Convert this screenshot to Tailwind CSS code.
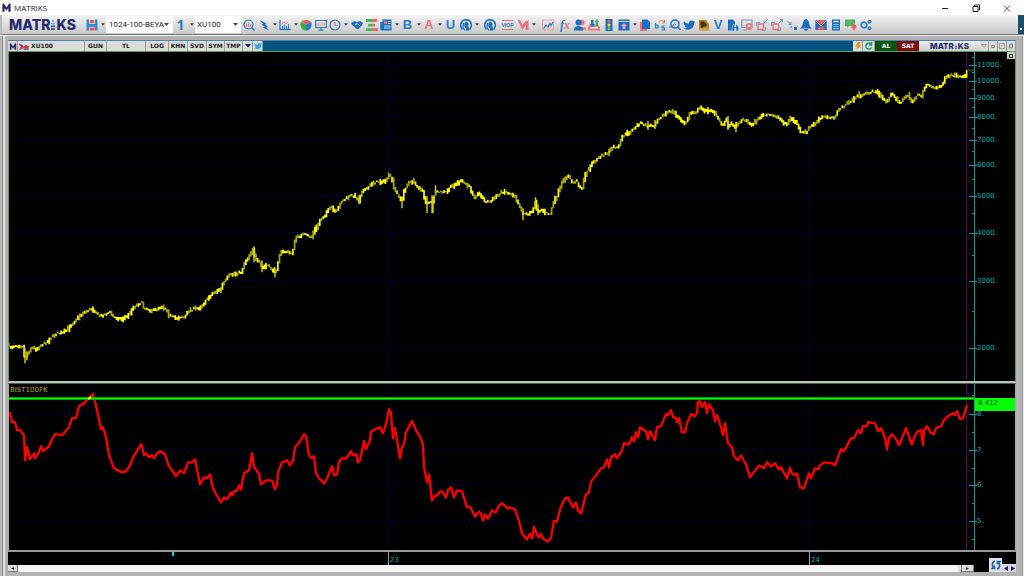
<!DOCTYPE html>
<html lang="tr">
<head>
<meta charset="utf-8">
<meta name="viewport" content="width=device-width, initial-scale=1">
<title>MATRIKS</title>
<script src="https://cdn.jsdelivr.net/npm/@tailwindcss/browser@4"></script>
</head>
<body class="flex h-screen flex-col overflow-hidden bg-white font-['Open_Sans',sans-serif]">

<svg class="hidden" aria-hidden="true">
  <symbol id="dn" viewBox="0 0 5 3"><path d="M0 0H5L2.5 3Z" fill="#444"/></symbol>
  <symbol id="m" viewBox="0 0 12 12"><path d="M0.5 11.5V1L2.5 .5L6 6L9.500 .5L11.500 1V11.500H8.500V6.500L6 10L3.500 6.500V11.500Z" fill="#272a6b"/></symbol>
  <symbol id="i" viewBox="0 0 4 11"><g fill="#46b4e6"><rect x="1" y="0" width="2" height="2"/><rect x="0" y="3" width="1.700" height="2"/><rect x="2.300" y="3" width="1.700" height="2"/></g><g fill="#272a6b"><rect x="0" y="6" width="1.700" height="2"/><rect x="2.300" y="6" width="1.700" height="2"/><rect x="0" y="9" width="1.700" height="2"/><rect x="2.300" y="9" width="1.700" height="2"/></g></symbol>
  <symbol id="bird" viewBox="0 0 12 12"><path d="M1 2C2.500 4 4 4.500 6 4.500C5.800 2.500 7 1.500 8.300 1.500C9.200 1.500 9.800 1.900 10.200 2.300L11.800 1.800L11.200 3L12 3.200L11 4.200C11 8.500 8 10.700 4.500 10.700C3 10.700 1.500 10.300 .5 9.600C2 9.700 3 9.300 3.800 8.700C2.600 8.500 2 7.900 1.700 7H2.700C1.500 6.500 .9 5.700 .9 4.600L1.800 4.800C.8 4 .6 3 1 2Z"/></symbol>
  <symbol id="head" viewBox="0 0 12 12"><path d="M2.500 10.500C-.8 7 .5 .8 6 .7C11.500 .8 12.800 7 9.500 10.500" fill="none" stroke="#1b6fc2" stroke-width="1.600"/><path d="M5.500 2.500C8 2.500 9 4.500 8.200 6.500L9.500 11.500H6V9L4.800 8.500C4 7 4 4 5.500 2.500Z" fill="#1b6fc2"/><path d="M3.500 4L3 8.500L5 11.500" fill="none" stroke="#1b6fc2" stroke-width="1.200"/></symbol>
</svg>

<header class="flex h-[15px] shrink-0 items-center bg-white">
  <svg class="ml-px h-[9px] w-[11px]" viewBox="0 0 12 12"><use href="#m"/></svg>
  <h1 class="ml-0.5 flex-1 text-[8px] leading-none text-[#222]">MATRIKS</h1>
  <div class="mr-3 flex gap-5 text-[#222]">
    <button aria-label="Simge durumuna küçült"><svg class="h-2.5 w-2.5" viewBox="0 0 10 10" fill="none" stroke="currentColor" stroke-width="1"><path d="M2 5.500H8"/></svg></button>
    <button aria-label="Önceki boyut"><svg class="h-2.5 w-3" viewBox="0 0 12 10" fill="none" stroke="currentColor" stroke-width="1"><path d="M3 3.500H8V8.500H3ZM4.500 3V2H9.500V7H8.500"/></svg></button>
    <button aria-label="Kapat"><svg class="h-2.5 w-2.5" viewBox="0 0 10 10" fill="none" stroke="currentColor" stroke-width=".8"><path d="M2 2.500L8 8.500M8 2.500L2 8.500"/></svg></button>
  </div>
</header>

<nav aria-label="Araç çubuğu" class="flex h-5 shrink-0 items-stretch border-b border-[#777] border-l-2 border-l-[#bbb] bg-linear-to-b from-[#f4f4f4] to-[#c8c8c8] [&>button]:grid [&>button]:shrink-0 [&>button]:place-items-center [&>button>svg]:h-3">
  <div class="flex w-[82px] shrink-0 items-center gap-px pl-[7px] font-['Inter',sans-serif] text-[14px] leading-none font-extrabold text-[#272a6b]">MATR<svg class="h-2.5 w-1"><use href="#i"/></svg>KS</div>
  <button aria-label="Kaydet" class="w-[15px]"><svg viewBox="0 0 12 12" class="w-3"><path d="M.5.5H3V5.500H9V.5H11.500V11.500H9V7.500H3V11.500H.5Z" fill="#2d8bd8"/><path d="M3 5H9V7.500H3Z" fill="#2d8bd8"/><path d="M4 1H8.200V4.300H4ZM3.700 8.500H8.500V11.500H3.700Z" fill="#f25555"/></svg></button>
  <button aria-label="Kaydet menüsü" class="w-[7px]"><svg class="max-h-[3px] w-1"><use href="#dn"/></svg></button>
  <div class="relative my-px flex w-[67px] shrink-0">
    <select aria-label="Sayfa" class="w-full appearance-none overflow-hidden bg-white pr-2 pl-[3px] font-['Roboto',sans-serif] text-[8px] leading-none text-[#222]"><option>1024-100-BEYA</option></select>
    <svg class="pointer-events-none absolute top-[7px] right-1 h-[3px] w-[5px]"><use href="#dn"/></svg>
  </div>
  <button aria-label="Sayfa 1" class="w-[15px] font-['Open_Sans',sans-serif] text-[14px] leading-none font-bold text-[#2a7cc8]">1</button>
  <button aria-label="Sayfa listesi" class="w-[7px]"><svg class="max-h-[3px] w-1"><use href="#dn"/></svg></button>
  <div class="relative my-px flex w-[46px] shrink-0">
    <select aria-label="Sembol" class="w-full appearance-none bg-white pr-2 pl-0.5 font-['Roboto',sans-serif] text-[8px] leading-none text-[#222]"><option>XU100</option></select>
    <svg class="pointer-events-none absolute top-[7px] right-[3px] h-[3px] w-[5px]"><use href="#dn"/></svg>
  </div>
  <button aria-label="Ara" class="w-[15px]"><svg viewBox="0 0 12 12" class="w-3" fill="none"><circle cx="5.500" cy="5.500" r="4.500" stroke="#2a7cc8" stroke-width="1.200"/><path d="M8.800 8.800L11.500 11.500" stroke="#2a7cc8" stroke-width="1.500"/><path d="M3.500 7.500V5M5.500 7.500V3.500M7.500 7.500V5.500" stroke="#f07078" stroke-width="1.200"/></svg></button>
  <button aria-label="Emir" class="w-[15px]"><svg viewBox="0 0 12 12" class="w-3"><path d="M1.500 1L8.500 4.500L7 5.500L10 8L8.500 8.500L11 11.500L5 8.600L6.700 7.700L3.500 5.500L5 4.800Z" fill="#1b6fc2"/></svg></button>
  <button aria-label="Emir menüsü" class="w-[7px]"><svg class="max-h-[3px] w-1"><use href="#dn"/></svg></button>
  <button aria-label="Grafik" class="w-3.5"><svg viewBox="0 0 12 12" class="w-3" fill="none"><path d="M1 1V10.500H11.500" stroke="#2a7cc8" stroke-width="1.300"/><path d="M3 5L5 2.500L7 5L9 3" stroke="#f07078" stroke-width=".8"/><path d="M3.500 10V7M5.500 10V5.500M7.500 10V7M9.500 10V5" stroke="#2a7cc8" stroke-width="1.100"/></svg></button>
  <button aria-label="Grafik menüsü" class="w-[7px]"><svg class="max-h-[3px] w-1"><use href="#dn"/></svg></button>
  <button aria-label="Pasta" class="w-3.5"><svg viewBox="0 0 12 12" class="w-3"><path d="M6 5.500L.8 3C2.500 .2 9.500 .2 11.200 3Z" fill="#f25f5f"/><path d="M6 5.500L11.500 3C12.300 8 10 11.200 6 11.700Z" fill="#2a7cc8"/><path d="M6 5.500V11.700C2 11.200 -.3 8 .5 3Z" fill="#33b24a"/></svg></button>
  <button aria-label="Ekran" class="w-[15px]"><svg viewBox="0 0 12 12" class="w-3" fill="none"><path d="M.7 1.500H11.300V8.500H.7Z" stroke="#2a7cc8" stroke-width="1.200"/><path d="M6 9V11M3.500 11.200H8.500" stroke="#2a7cc8" stroke-width="1.200"/><path d="M3 7V4M5 7V3.500M7 7V4M9 7V3.500" stroke="#f0a060"/></svg></button>
  <button aria-label="Saat" class="w-3.5"><svg viewBox="0 0 12 12" class="w-3" fill="none"><circle cx="6" cy="6" r="5" stroke="#2a7cc8" stroke-width="1.200"/><path d="M6 2.500V6.500H9" stroke="#f07078" stroke-width="1.200"/></svg></button>
  <button aria-label="Saat menüsü" class="w-[7px]"><svg class="max-h-[3px] w-1"><use href="#dn"/></svg></button>
  <button aria-label="Takas" class="w-[15px]"><svg viewBox="0 0 12 12" class="w-3"><path d="M0 4L3 2L6 3L9 2L12 4L10.500 7L7.500 10.200L5.500 9.800L1.500 6.500Z" fill="#1b6fc2"/><path d="M6 3.500L4.500 5.500L7 5L9.500 7.500" fill="none" stroke="#dcdcdc" stroke-width=".8"/></svg></button>
  <button aria-label="Derinlik" class="w-[15px]"><svg viewBox="0 0 12 12" class="w-3"><path d="M0 0H6V3H0ZM2 4.700H6V7.500H2ZM0 9.200H6V12H0Z" fill="#3fb85a"/><path d="M6 0H11V3H6ZM6 4.700H9V7.500H6ZM6 9.200H12V12H6Z" fill="#f06468"/></svg></button>
  <button aria-label="Haberler" class="w-3.5"><svg viewBox="0 0 12 12" class="w-3"><path d="M2.500.5H11.500V11.500H1.500Q.3 11.500 .3 10V3H2.500Z" fill="#1b6fc2"/><path d="M4 2H7V5H4Z" fill="#f07078"/><path d="M8 2.500H10.500M8 4.500H10.500M4 7H10.500M4 9H10.500" stroke="#e4e4e4" stroke-width=".9"/></svg></button>
  <button aria-label="Haber menüsü" class="w-[7px]"><svg class="max-h-[3px] w-1"><use href="#dn"/></svg></button>
  <button class="w-[15px] font-['Liberation_Sans',sans-serif] text-[13px] leading-none font-bold text-[#2a7cc8]">B</button>
  <button aria-label="B menüsü" class="w-[7px]"><svg class="max-h-[3px] w-1"><use href="#dn"/></svg></button>
  <button class="w-3.5 font-['Liberation_Sans',sans-serif] text-[13px] leading-none font-bold text-[#f07078]">A</button>
  <button aria-label="A menüsü" class="w-[7px]"><svg class="max-h-[3px] w-1"><use href="#dn"/></svg></button>
  <button class="w-[15px] font-['Liberation_Sans',sans-serif] text-[13px] leading-none font-bold text-[#2a7cc8]">U</button>
  <button aria-label="Analist" class="w-[15px]"><svg class="w-3"><use href="#head"/></svg></button>
  <button aria-label="Analist menüsü" class="w-[7px]"><svg class="max-h-[3px] w-1"><use href="#dn"/></svg></button>
  <button aria-label="Uzman" class="ml-0.5 w-[15px]"><svg class="w-3"><use href="#head"/></svg></button>
  <button class="ml-[3px] w-[15px]"><span class="border-y border-[#f07078] font-['Liberation_Sans',sans-serif] text-[5px] leading-[8px] font-bold text-[#2a7cc8]">VIOP</span></button>
  <button aria-label="Matriks" class="w-[15px]"><svg viewBox="0 0 12 12" class="w-3"><path d="M.5 1H3L5.500 6L9.500 1V3L11.500 1V11H8.800V6L5.500 11Z" fill="#f07078"/></svg></button>
  <button aria-label="Matriks menüsü" class="w-[7px]"><svg class="max-h-[3px] w-1"><use href="#dn"/></svg></button>
  <button aria-label="Çizgi grafik" class="ml-[3px] w-[15px]"><svg viewBox="0 0 12 12" class="w-3" fill="none"><path d="M.6 1H11.400V11H.6Z" stroke="#f0a0a4"/><path d="M1.500 9.500L4 6L6 8L8 4.500L9 6.500L11 3" stroke="#2a7cc8" stroke-width="1.100"/></svg></button>
  <button class="ml-[3px] w-3.5"><span class="font-['Liberation_Serif',serif] text-[12px] leading-none font-bold text-[#2a7cc8] italic">f<span class="text-[#f07078]">x</span></span></button>
  <button aria-label="Kullanıcılar" class="w-[15px]"><svg viewBox="0 0 12 12" class="w-3"><circle cx="8" cy="3.500" r="2.700" fill="#f07078"/><path d="M6 11V8L12 8.500V11Z" fill="#f07078"/><circle cx="4.500" cy="3.500" r="3" fill="#1b6fc2"/><path d="M0 11.500C0 8 1.500 7.500 4.500 7C7.500 7.500 9 8 9 11.500Z" fill="#1b6fc2"/></svg></button>
  <button aria-label="Aktarım" class="w-3.5"><svg viewBox="0 0 12 12" class="w-3"><path d="M0 8L2 6H10L12 8V11.500H0Z" fill="#f07078"/><path d="M2 8H10V9.500H2Z" fill="#eee"/><path d="M3 1V5H1.500L4.500 8L7 5H5.500V1Z" fill="#1b6fc2"/><path d="M7.500 7V3H6.500L9 0L11.500 3H10V7Z" fill="#3fb85a"/></svg></button>
  <button aria-label="Durum" class="w-[15px]"><svg viewBox="0 0 12 12" class="w-3"><path d="M2.500 0H9.500V12H2.500Z" fill="#1b6fc2"/><circle cx="6" cy="2.500" r="1.500" fill="#f25f5f"/><circle cx="6" cy="6" r="1.500" fill="#ffe14a"/><circle cx="6" cy="9.500" r="1.500" fill="#4fd05f"/></svg></button>
  <button aria-label="Pencere" class="w-[15px]"><svg viewBox="0 0 12 12" class="w-3"><path d="M.5.5H11.500V11.500H.5Z" fill="#1b6fc2"/><path d="M.5 2.500H11.500" stroke="#ddd"/><path d="M6 4L9 7H7.500V10H4.500V7H3Z" fill="#f4a0a4"/></svg></button>
  <button aria-label="Pencere menüsü" class="w-[7px]"><svg class="max-h-[3px] w-1"><use href="#dn"/></svg></button>
  <button aria-label="Kopyala" class="w-3.5"><svg viewBox="0 0 12 12" class="w-3"><path d="M1 3H8V12H1Z" fill="#f07078"/><path d="M3 .5H8.500L11 3V10H3Z" fill="#1b6fc2"/></svg></button>
  <button aria-label="Al sat" class="w-[15px]"><svg viewBox="0 0 12 12" class="w-3" fill="none"><path d="M1.500 4V9H4V6H1.500M10.500 7H8V8.800H10.500V11H7.500" stroke="#2a7cc8" stroke-width="1.200"/><path d="M5 3.500C6 1 9 1 10.500 4M10.500 1V4H8" stroke="#f07078" stroke-width="1"/></svg></button>
  <button aria-label="Sembol ara" class="w-[15px]"><svg viewBox="0 0 12 12" class="w-3" fill="none" stroke="#2a7cc8"><circle cx="6" cy="5" r="4" stroke-width="1.600"/><path d="M9 8L11.500 11" stroke-width="1.800"/><path d="M0 8H3L5.500 4.500L7 6" /></svg></button>
  <button aria-label="Twitter" class="w-3.5"><svg class="w-3" fill="#1b6fc2"><use href="#bird"/></svg></button>
  <button aria-label="Altın" class="w-[15px]"><svg viewBox="0 0 12 12" class="w-3"><path d="M1 1H8L11 5V11.500H1Z" fill="#b8862c"/><path d="M2 3C5 1 8 3 9 7L3 9Z" fill="#4a3512"/><path d="M1 10H11" stroke="#e0b860"/></svg></button>
  <button class="w-3.5 font-['Liberation_Sans',sans-serif] text-[13px] leading-none font-bold text-[#2a7cc8]">V</button>
  <button aria-label="Rapor ara" class="w-[15px]"><svg viewBox="0 0 12 12" class="w-3"><path d="M1 .5H6L8 2.500V11.500H1Z" fill="#1b6fc2"/><path d="M5 12V8L6.500 5.500H7.500V8H9V5.500H10L11.700 8V12H9V9.500H7.500V12Z" fill="#1b6fc2" stroke="#ddd" stroke-width=".6"/></svg></button>
  <button aria-label="Ekran ayarı" class="w-3.5"><svg viewBox="0 0 12 12" class="w-3" fill="none"><path d="M.7 1H11V8.500H.7ZM2.500 11H6" stroke="#6c9cd0" stroke-width="1.200"/><circle cx="8" cy="7.500" r="2.600" stroke="#f07078" stroke-width="1.700"/></svg></button>
  <button aria-label="Küçült" class="w-[15px]"><svg viewBox="0 0 12 12" class="w-3" fill="none"><path d="M2 5H7.500V10.500H2Z" stroke="#f07078" stroke-width="1.300"/><path d="M.5 7V3.500H4M11.500.5L8 4M8 1.500V4H10.500M9.500 8V11.500H6" stroke="#5c94cc" stroke-width=".8"/></svg></button>
  <button aria-label="Büyüt" class="w-[15px]"><svg viewBox="0 0 12 12" class="w-3" fill="none"><path d="M2 5H7.500V10.500H2Z" stroke="#f07078" stroke-width="1.300"/><path d="M.5 7V3.500H4M8 4L11.500.5M9 .5H11.500V3M9.500 8V11.500H6" stroke="#5c94cc" stroke-width=".8"/></svg></button>
  <button aria-label="Taşı" class="w-[15px]"><svg viewBox="0 0 12 12" class="w-3"><path d="M1 1.500L5 5.500M5 3V5.500H2.500" fill="none" stroke="#5c94cc"/><path d="M8 8H11V11H8Z" fill="#1b6fc2"/><path d="M5.500 7V8.500H4" stroke="#5c94cc" fill="none"/></svg></button>
  <button aria-label="Alarm" class="w-3.5"><svg viewBox="0 0 12 12" class="w-3" fill="#1b6fc2"><path d="M6 0C7 0 9 1.500 9.200 4.500C9.400 7 10.500 8 12 9.500H0C1.500 8 2.600 7 2.800 4.500C3 1.500 5 0 6 0Z"/><path d="M4 10H8C8 12.400 4 12.400 4 10Z"/></svg></button>
  <button aria-label="Posta" class="w-[15px]"><svg viewBox="0 0 12 12" class="w-3"><path d="M.3 1H11.700V11H.3Z" fill="#1b6fc2"/><path d="M1 1.300H11L6 6.500ZM1.500 10.700L5 7L6 8L7 7L10.500 10.700Z" fill="#f25f5f"/><path d="M.5 1.500L6 7L11.500 1.500" fill="none" stroke="#f0d8d8" stroke-width=".8"/></svg></button>
  <button aria-label="Hesap makinesi" class="w-[15px]"><svg viewBox="0 0 12 12" class="w-3"><path d="M2 .5H10V11.500H2Z" fill="#1b6fc2"/><path d="M3.500 2.500H8.500" stroke="#e8e8e8" stroke-width="1.500"/><path d="M3.500 5.500H8.500M3.500 7.500H8.500M3.500 9.500H8.500" stroke="#d4e2f0" stroke-dasharray="1.200 .7"/></svg></button>
  <button aria-label="Sohbet" class="w-[15px]"><svg viewBox="0 0 12 12" class="w-3"><path d="M0 .5H10V7H4L2 9V7H0Z" fill="#4fb562"/><path d="M6 6.500C7 5 8 5 9 6.500C10 5 12 6 11.500 8L9 11.500L6.500 8.500Z" fill="#f25f6a"/></svg></button>
  <button aria-label="Ayarlar" class="w-[15px]"><svg viewBox="0 0 12 12" class="w-3" fill="none" stroke="#2a7cc8"><circle cx="4" cy="6" r="2.800" stroke-width="1.700"/><circle cx="9.500" cy="2.800" r="1.400" stroke-width="1.200"/><circle cx="9.500" cy="9.200" r="1.400" stroke-width="1.200"/></svg></button>
  <span class="flex-1"></span>
  <button aria-label="Araç çubuğu seçenekleri" class="w-1.5 bg-[#1f4a68]"><span class="mt-2 h-0.5 w-0.5 bg-white"></span></button>
</nav>

<main class="flex min-h-0 flex-1 border-t border-[#eee] bg-[#b2b2b2]">
  <div class="w-[3px] border-r border-[#858585] bg-[#b8b8b8]"></div>
  <div class="w-0.5 bg-[#e4e4e4]"></div>
  <div class="flex min-w-0 flex-1 flex-col pt-1 pr-1.5 pb-1 pl-[3px]">

    <div class="flex h-[11px] shrink-0 items-stretch border-t border-[#4a86ae] bg-[#04527f] font-['DejaVu_Sans',sans-serif] text-[6px] leading-[10px] font-bold text-[#222] [&>button]:shrink-0 [&>button]:border-r [&>button]:border-[#999] [&>button]:bg-[#dcdcdc] [&>button]:text-center">
      <button aria-label="Matriks menü" class="grid w-2.5 place-items-center"><svg class="h-[7px] w-2"><use href="#m"/></svg></button>
      <button class="flex w-[67px] items-center gap-px"><svg class="h-[7px] w-3" viewBox="0 0 13 8" fill="none"><path d="M1 1L4 4L2 7L6 5L9 3" stroke="#d83a3a" stroke-width="1.500"/><path d="M6 6L9 2L12 4V6Z" fill="#d83a3a"/><path d="M6 7H12M3 2L5 4" stroke="#34348c" stroke-width="1.300"/></svg>XU100</button>
      <button class="w-[22px]">GUN</button>
      <button class="w-[39px]">TL</button>
      <button class="w-[23px]">LOG</button>
      <button class="w-[19px]">KHN</button>
      <button class="w-[19px]">SVD</button>
      <button class="w-[18px]">SYM</button>
      <button class="w-[18px]">TMP</button>
      <button aria-label="Diğer" class="grid w-2.5 place-items-center"><svg class="h-1 w-1.5" viewBox="0 0 6 4"><path d="M0 0H6L3 3.500Z" fill="#14145c"/></svg></button>
      <button aria-label="Paylaş" class="grid w-2.5 place-items-center"><svg class="h-2 w-2" fill="#2fa8dc"><use href="#bird"/></svg></button>
      <span class="flex-1"></span>
      <button aria-label="Hızlı emir" class="grid w-2.5 place-items-center"><svg class="h-2 w-2" viewBox="0 0 8 8"><path d="M4 0L1 4.500H3.500L2 8L7.500 3.200H5L6.500 0Z" fill="#f09010"/></svg></button>
      <button aria-label="Yenile" class="grid w-3 place-items-center"><svg class="h-2 w-2" viewBox="0 0 8 8" fill="none"><path d="M6.500 5.500A3 3 0 1 1 6 2M6.500 0V3H4" stroke="#1c9a74" stroke-width="1.500"/></svg></button>
      <div class="flex w-11 shrink-0 text-center text-white"><button class="flex-1 bg-[#0a5410]">AL</button><button class="flex-1 bg-[#7c0c10]">SAT</button></div>
      <div class="flex w-[61px] shrink-0 items-center justify-center gap-px bg-linear-to-b from-[#f0f0f0] to-[#cccccc] font-['Inter',sans-serif] text-[8px] font-extrabold text-[#272a6b]">MATR<svg class="h-1.5 w-0.5"><use href="#i"/></svg>KS</div>
      <button aria-label="Aşağı" class="grid w-[9px] place-items-center"><svg class="h-1.5 w-1.5" viewBox="0 0 6 6" fill="none" stroke="#999"><path d="M.5 1.500H5.500L3 4.500Z"/></svg></button>
      <button aria-label="Küçült" class="grid w-[9px] place-items-center"><svg class="h-1.5 w-1.5" viewBox="0 0 6 6" fill="none" stroke="#888"><path d="M1.500 2.500H4.500V4.500H1.500Z"/></svg></button>
      <button aria-label="Kapla" class="grid w-[9px] place-items-center"><svg class="h-1.5 w-1.5" viewBox="0 0 6 6" fill="none" stroke="#999"><path d="M.5.5H5.500V5.500H.5ZM2 3H4"/></svg></button>
      <button aria-label="Kapat" class="grid w-[9px] place-items-center"><svg class="h-1.5 w-1.5" viewBox="0 0 6 6" fill="none" stroke="#777"><path d="M1.500 1H4.500V5H1.500Z"/></svg></button>
    </div>

    <section aria-label="XU100 fiyat grafiği" class="relative flex min-h-0 flex-[330] border border-[#5c9c5c] border-b-[#9ccc9c] bg-black">
      <svg id="price" class="h-full min-w-0 flex-1" viewBox="9 52 965 329" preserveAspectRatio="none"></svg>
      <div id="axis1" class="relative w-[41px] shrink-0 border-l border-[#00a0a0] font-['DejaVu_Sans',sans-serif] text-[7px] leading-[8px] text-[#00b4b4]"></div>
      <button aria-label="Bölmeyi büyüt" class="absolute top-0 right-0 grid h-[7px] w-2 place-items-center bg-[#ccc]"><span class="h-1 w-1 border border-[#333]"></span></button>
    </section>
    <div class="h-0.5 shrink-0 border-t border-[#ccc] bg-[#555]"></div>
    <section aria-label="BIST100FK göstergesi" class="relative flex min-h-0 flex-[166] border-x border-x-[#aaa] border-b-2 border-b-[#999] bg-black">
      <svg id="ratio" class="h-full min-w-0 flex-1" viewBox="9 384 965 165" preserveAspectRatio="none"></svg>
      <h2 class="absolute top-0.5 left-px font-['DejaVu_Sans',sans-serif] text-[7px] leading-[8px] text-[#b4b400]">BIST100FK</h2>
      <div id="axis2" class="relative w-[41px] shrink-0 border-l border-[#00a0a0] font-['DejaVu_Sans',sans-serif] text-[7px] leading-[8px] text-[#00b4b4]"></div>
    </section>

    <footer class="flex h-5 shrink-0 bg-black">
      <div class="flex min-w-0 flex-1 flex-col">
        <div id="dates" class="relative flex-1 font-['DejaVu_Sans',sans-serif] text-[7px] leading-[8px] text-[#00b4b4]"></div>
        <div class="flex h-[7px] items-stretch bg-[#f4f4f4]">
          <button aria-label="Sola kaydır" class="grid w-2.5 place-items-center border-r border-b border-[#777] bg-[#ddd]"><svg class="h-[3px] w-[3px]" viewBox="0 0 3 3"><path d="M3 0V3L0 1.500Z" fill="#333"/></svg></button>
          <span class="flex-1"></span>
          <span class="w-1 border-r border-[#777] bg-[#ddd]"></span>
          <button aria-label="Sağa kaydır" class="grid w-3 place-items-center border-r border-b border-[#777] bg-[#ddd]"><svg class="h-[3px] w-[3px]" viewBox="0 0 3 3"><path d="M0 0V3L3 1.500Z" fill="#333"/></svg></button>
        </div>
      </div>
      <div class="flex w-[42px] items-end justify-end">
        <button aria-label="Yenile" class="grid h-3.5 w-[13px] place-items-center bg-[#dde4ee]"><svg class="h-3 w-3" viewBox="0 0 12 12" fill="none" stroke="#2a62a8" stroke-width="1.700"><path d="M5 2C2 3 1.500 6 3.500 9M1 9.500H4.500V6.500M7 10C10 9 10.500 6 8.500 3M11 2.500H7.500V5.500"/></svg></button>
        <button aria-label="Geri" class="grid h-2 w-[7px] place-items-center bg-[#dcdcdc]"><svg class="h-[5px] w-1" viewBox="0 0 5 6"><path d="M5 0V6L0 3Z" fill="#1414a0"/></svg></button>
        <button aria-label="İleri" class="grid h-2 w-[7px] place-items-center bg-[#dcdcdc]"><svg class="h-[5px] w-1" viewBox="0 0 5 6"><path d="M0 0V6L5 3Z" fill="#1414a0"/></svg></button>
      </div>
    </footer>
  </div>
  <div class="w-0.5 border-l border-[#999] bg-[#ececec]"></div>
</main>

<script>
// Series as x,y pairs in chart units.
const price = '8,345 11,347 16,345 24,346 25,357 27,355 30,350 33,347 37,349 41,345 47,342 53,336 57,333 63,333 68,329 73,323 80,316 83,313 93,308 97,313 100,316 111,312 114,317 123,319 130,314 133,308 138,304 143,302 144,307 153,311 162,306 167,309 170,316 177,318 182,316 185,318 189,310 201,307 205,302 213,293 221,289 224,283 230,275 242,272 245,263 250,255 254,248 256,260 261,263 262,268 268,265 275,272 278,267 279,257 283,251 292,253 294,249 296,238 303,234 312,237 315,230 318,227 321,219 327,213 332,206 335,213 338,210 341,202 352,195 357,197 359,202 363,189 367,190 372,183 383,181 384,183 390,175 393,181 395,190 399,195 402,202 405,190 408,184 413,181 418,186 424,193 426,202 433,203 435,195 437,192 447,192 452,186 462,181 470,187 475,197 480,193 485,201 490,202 497,196 503,191 515,195 520,205 523,213 528,214 533,212 536,200 538,212 542,209 545,213 551,214 553,205 557,197 561,187 565,178 569,176 573,183 577,180 580,187 583,188 585,177 589,169 593,163 600,157 607,153 609,153 613,147 619,148 623,136 632,131 640,123 648,126 655,125 658,119 667,113 672,111 678,116 683,123 687,122 691,112 697,112 701,107 707,112 711,109 715,113 720,121 723,126 727,118 728,128 732,123 736,127 739,122 745,119 751,125 757,121 761,116 768,115 777,116 787,125 791,118 798,124 801,133 807,132 810,127 815,124 819,120 823,117 835,117 840,109 853,100 860,94 862,97 867,93 876,91 880,95 887,102 892,94 901,103 908,94 912,102 918,95 923,97 924,88 928,84 936,89 943,84 947,77 953,75 962,78 966,76 967,70';
const ratio = '8,413 10,413 12,422 15,422 17,430 20,430 24,435 25,460 27,447 30,459 34,453 35,458 39,452 41,446 43,451 49,446 52,439 55,434 62,435 69,427 72,418 76,418 79,406 83,404 88,399 93,394 97,410 101,429 103,427 106,437 109,455 114,468 122,472 126,471 130,465 133,457 138,449 141,444 142,446 144,455 146,453 149,457 152,455 154,458 157,453 160,451 165,454 169,466 173,471 176,476 180,470 184,473 188,462 192,462 195,459 200,484 204,477 207,478 210,474 213,488 218,497 221,502 224,497 227,499 231,492 232,495 234,491 237,490 239,485 241,489 244,473 249,470 252,453 254,466 259,474 261,484 266,480 272,480 275,489 277,485 278,472 282,462 287,460 290,465 293,460 295,447 300,441 304,434 306,436 309,455 312,458 314,456 316,473 320,479 324,483 327,478 332,466 334,475 337,474 339,462 342,458 346,458 351,451 353,455 356,454 358,462 360,460 364,441 366,449 370,440 371,431 380,427 383,433 386,424 389,409 391,413 393,438 395,428 397,440 400,458 402,447 404,444 406,432 412,421 417,432 420,436 423,445 424,467 427,482 429,474 432,500 434,496 437,495 440,491 442,491 446,497 448,490 451,487 454,497 457,490 462,491 467,507 470,506 475,516 479,511 481,513 483,520 485,514 488,518 492,510 496,512 499,505 502,503 508,508 510,507 515,509 519,520 522,533 527,539 530,533 532,538 534,526 537,534 539,537 541,533 543,538 548,541 551,537 554,520 557,521 559,513 561,506 565,498 568,497 573,507 576,502 578,510 581,513 583,505 586,494 589,492 591,481 596,475 601,468 604,467 607,459 609,467 611,457 615,454 617,458 622,450 624,443 629,444 632,437 634,441 636,432 638,437 640,427 646,431 648,439 650,431 655,440 657,427 661,426 666,414 668,415 671,410 673,417 676,418 677,422 679,418 682,432 685,432 687,423 691,414 695,416 697,413 698,402 700,401 702,407 705,402 707,413 709,404 713,410 715,421 717,415 721,427 723,435 725,423 728,443 732,447 734,456 738,460 741,455 746,464 750,477 753,473 759,465 764,468 767,462 771,466 775,463 779,469 781,467 787,478 790,467 792,473 795,475 797,473 800,487 804,488 809,473 811,478 815,468 818,469 820,465 824,462 832,463 835,465 841,449 844,451 851,438 854,438 858,430 861,433 863,426 867,426 868,422 875,423 878,431 881,428 885,438 887,449 889,438 892,434 895,437 899,445 902,438 906,428 908,433 911,443 912,444 915,435 918,431 921,430 923,445 924,430 927,426 931,433 934,434 936,428 941,426 944,420 948,416 953,413 955,415 957,411 960,419 963,418 967,405';

// Grid lines, shared by both panes.
function grid(rows, top, bottom) {
  let d = rows.map(([y]) => `M12 ${y}H966`).join('');
  d += [388.5, 809].map(x => `M${x} ${top}V${bottom}`).join('');
  return `<path d="${d}" stroke="#00005c" stroke-dasharray="2 2" fill="none"/>
    <path d="M966.500 ${top}V${bottom}" stroke="#5c0060" fill="none"/>`;
}
// Tick marks and labels of a value axis, placed as a share of the pane's height.
function axis(id, rows, minor, top, height) {
  const at = y => `top:${((y - top) / height * 100).toFixed(2)}%`;
  document.getElementById(id).innerHTML =
    rows.map(([y, t]) => `<i class="absolute -left-1.5 h-px w-2 bg-[#00a0a0]" style="${at(y)}"></i><span class="absolute left-0.5 -translate-y-1/2" style="${at(y)}">${t}</span>`).join('') +
    minor.map(y => `<i class="absolute -left-[3px] h-px w-[3px] bg-[#00a0a0]" style="${at(y)}"></i>`).join('');
}
const rows1 = [[64.5, '11000.'], [80.5, '10000.'], [97.5, '9000.'], [117, '8000.'], [139.5, '7000.'], [165, '6000.'], [195.5, '5000.'], [232.5, '4000.'], [280.5, '3000.'], [348, '2000.']];
const rows2 = [[413.5, '8.'], [449.5, '7.'], [484.5, '6.'], [520.5, '5.']];
axis('axis1', rows1, [57, 72, 89, 107, 128, 151, 179, 213, 255, 311], 52, 329);
axis('axis2', rows2, [395, 431, 467, 502, 538], 384, 165);

// Daily bars, interpolated between the key points.
const pts = price.split(' ').map(p => p.split(',').map(Number));
const level = x => {
  let k = 1;
  while (k < pts.length - 1 && pts[k][0] < x) k++;
  const [a, b] = [pts[k - 1], pts[k]];
  return a[1] + (b[1] - a[1]) * Math.min(1, (x - a[0]) / (b[0] - a[0]));
};
let dim = '', bright = '', seed = 7;
const rnd = () => (seed = (seed * 16807) % 2147483647) / 2147483647;
for (let x = 9; x < 967; x += 1.68) {
  const a = level(x - .8), b = level(x + .8), mid = (a + b) / 2 + (rnd() - .5) * 2.2;
  const half = Math.abs(a - b) / 2 + .6 + rnd() * rnd() * 2.6;
  const bar = `M${x.toFixed(1)} ${(mid - half).toFixed(1)}V${(mid + half).toFixed(1)}`;
  if (rnd() < .45) dim += bar; else bright += bar;
}
const spikes = 'M25 348V363M27 351V360M221 287V293M254 246V262M262 260V272M275 268V277M359 195V204M402 198V208M427 196V213M432 195V213M433 196V213M435.500 185V193M523 208V220M535.500 197V209M538 204V215M609 149V156M648 121V130M655 120V129M728 116V130M736 122V132';
document.getElementById('price').innerHTML = grid(rows1, 52, 381) +
  `<path d="${dim}" stroke="#a8a800" stroke-width="1.700" fill="none"/>
   <path d="${bright}" stroke="#ffff00" stroke-width="1.700" fill="none"/>
   <path d="${spikes}" stroke="#d4d400" stroke-width="1.400" fill="none"/>
   <path d="M967 70H974" stroke="#0a8a0a" fill="none"/>`;

document.getElementById('ratio').innerHTML = grid(rows2, 384, 549) +
  `<polyline points="${ratio}" stroke="#ff0000" stroke-width="2.300" stroke-linejoin="round" fill="none"/>
   <path d="M8 398.500H974" stroke="#008c00" stroke-width="3"/><path d="M8 398.500H974" stroke="#00ff00" stroke-width="1.600"/>
   <path d="M88 399L91 397" stroke="#ffff00" stroke-width="2"/>`;
document.getElementById('axis2').insertAdjacentHTML('beforeend',
  `<output class="absolute inset-x-0 h-[13px] bg-[#00ff00] pt-px pl-[3px] text-[#064006]" style="top:${(14 / 165 * 100).toFixed(2)}%">8.412</output>`);

document.getElementById('dates').innerHTML =
  [[388, '23'], [809, '24']].map(([x, t]) => `<span class="absolute inset-y-0 border-l border-[#999] pt-1 pl-px" style="left:${((x - 8) / 966 * 100).toFixed(2)}%">${t}</span>`).join('') +
  `<i class="absolute top-0 h-1 w-0.5 bg-[#00d4e4]" style="left:${(164 / 966 * 100).toFixed(2)}%"></i>`;
</script>
</body>
</html>
